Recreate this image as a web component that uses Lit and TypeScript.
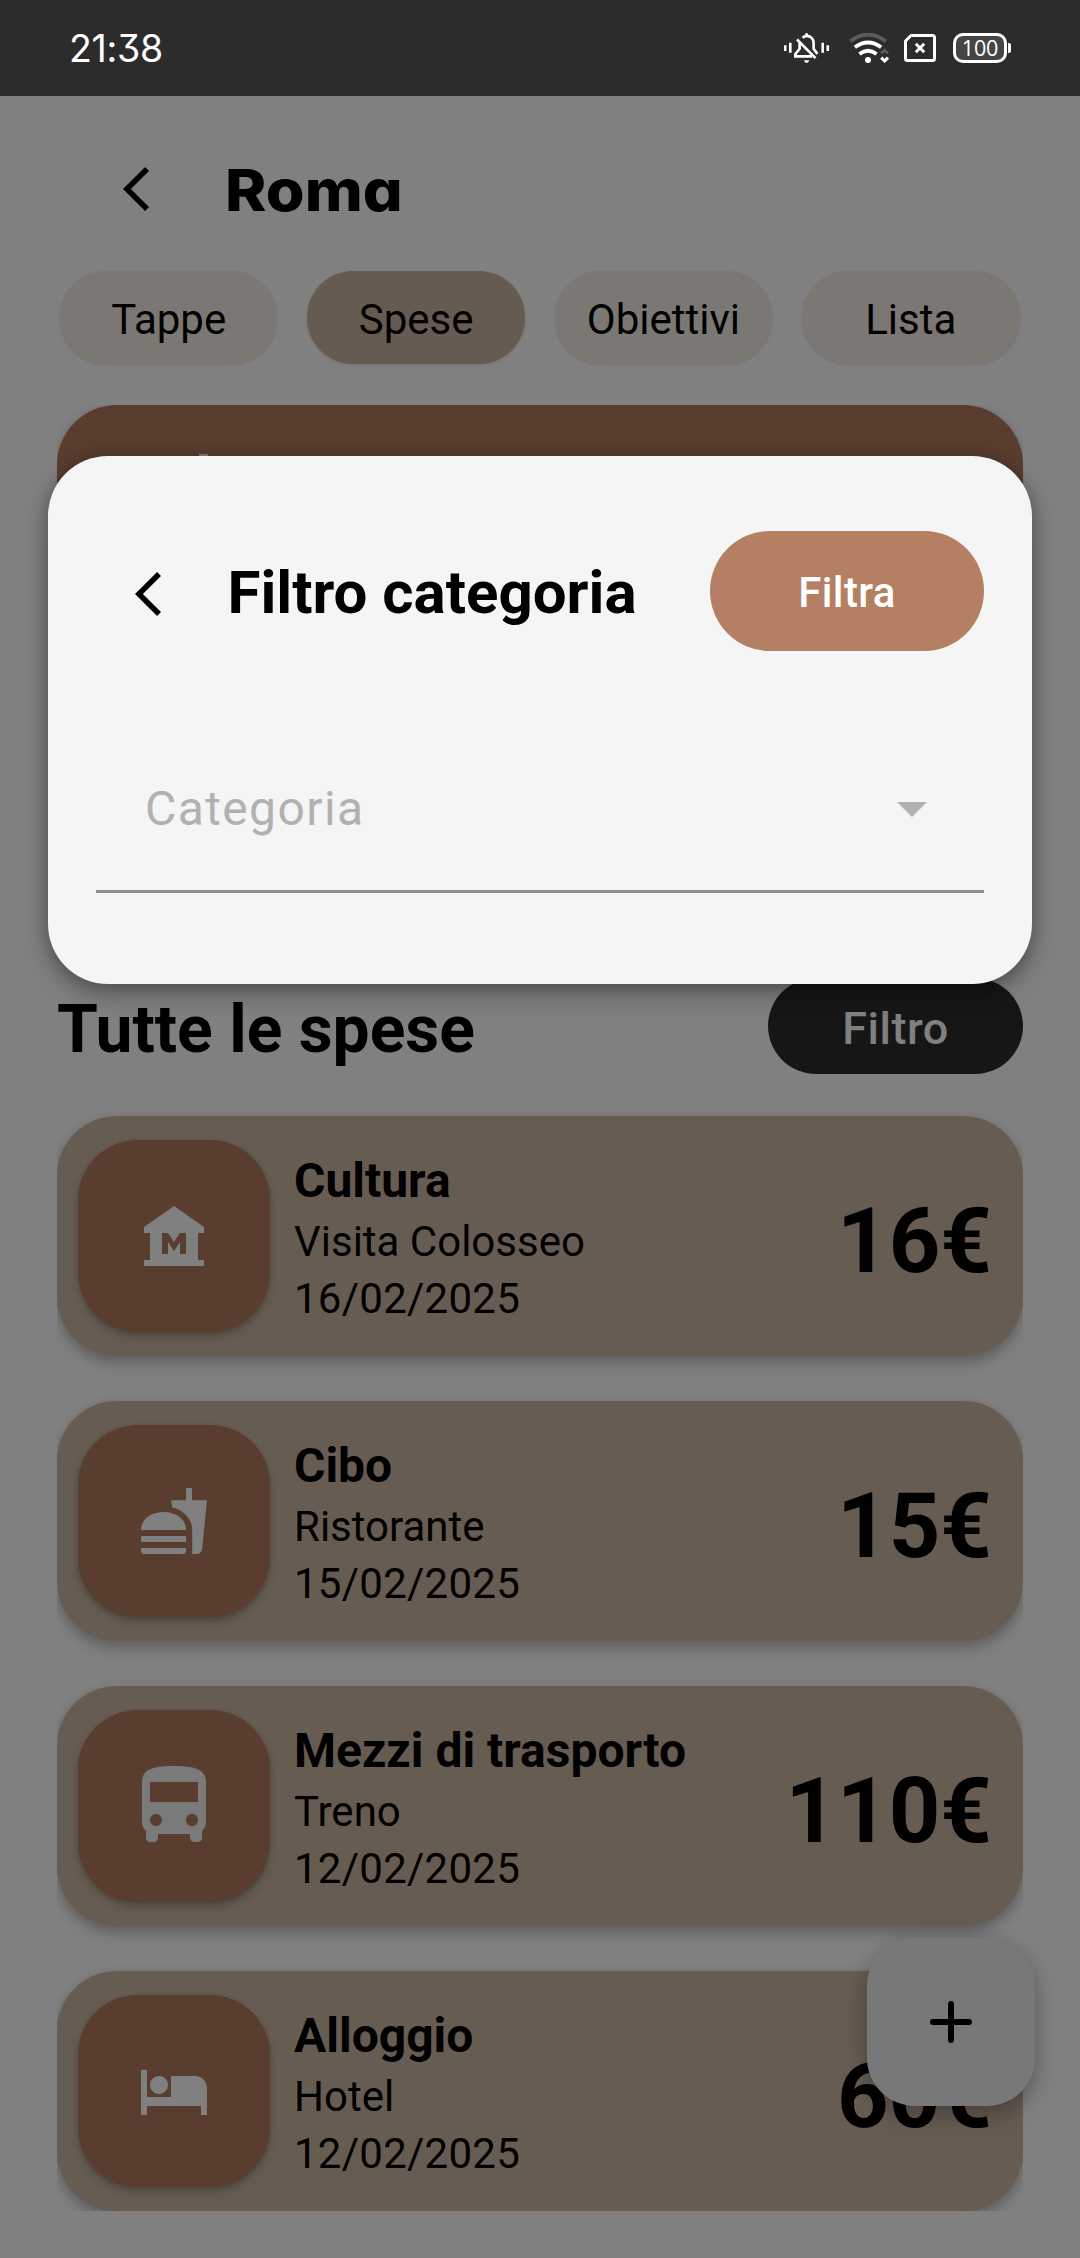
import { LitElement, html, css, svg } from "lit";
import { customElement, property } from "lit/decorators.js";

type Expense = { icon: string; category: string; title: string; date: string; amount: string };

const ICONS: Record<string, string> = {
  museum:
    "M22 11V9L12 2 2 9v2h2v9H2v2h20v-2h-2v-9h2zm-6 7h-2v-4l-2 3-2-3v4H8v-7h2l2 3 2-3h2v7z",
  food:
    "M18.06 22.99h1.66c.84 0 1.53-.64 1.63-1.46L23 5.05h-5V1h-1.97v4.05h-4.97l.3 2.34c1.71.47 3.31 1.32 4.27 2.26 1.44 1.42 2.43 2.89 2.43 5.29v8.05zM1 21.99V21h15.03v.99c0 .55-.45 1-1.01 1H2.01c-.56 0-1.01-.45-1.01-1zm15.03-7c0-8-15.03-8-15.03 0h15.03zM1.02 17h15v2h-15z",
  bus:
    "M4 16c0 .88.39 1.67 1 2.22V20c0 .55.45 1 1 1h1c.55 0 1-.45 1-1v-1h8v1c0 .55.45 1 1 1h1c.55 0 1-.45 1-1v-1.78c.61-.55 1-1.34 1-2.22V6c0-3.5-3.58-4-8-4s-8 .5-8 4v10zm3.5 1c-.83 0-1.5-.67-1.5-1.5S6.67 14 7.5 14s1.5.67 1.5 1.5S8.33 17 7.5 17zm9 0c-.83 0-1.5-.67-1.5-1.5s.67-1.5 1.5-1.5 1.5.67 1.5 1.5-.67 1.5-1.5 1.5zm1.5-6H6V6h12v5z",
  hotel:
    "M7 13c1.66 0 3-1.34 3-3S8.66 7 7 7s-3 1.34-3 3 1.34 3 3 3zm12-6h-8v7H3V5H1v15h2v-3h18v3h2v-9c0-2.21-1.79-4-4-4z",
};

const EXPENSES: Expense[] = [
  { icon: "museum", category: "Cultura", title: "Visita Colosseo", date: "16/02/2025", amount: "16€" },
  { icon: "food", category: "Cibo", title: "Ristorante", date: "15/02/2025", amount: "15€" },
  { icon: "bus", category: "Mezzi di trasporto", title: "Treno", date: "12/02/2025", amount: "110€" },
  { icon: "hotel", category: "Alloggio", title: "Hotel", date: "12/02/2025", amount: "60€" },
];

const TABS = ["Tappe", "Spese", "Obiettivi", "Lista"];

const chevron = html`<svg width="26" height="44" viewBox="0 2.1 11.67 19.8" preserveAspectRatio="none">
  <path d="M11.67 3.87L9.9 2.1 0 12l9.9 9.9 1.77-1.77L3.54 12z" />
</svg>`;

@customElement("status-bar")
export class StatusBar extends LitElement {
  static styles = css`
    :host {
      display: flex;
      justify-content: space-between;
      align-items: center;
      height: 96px;
      padding: 0 69px 0 69px;
      box-sizing: border-box;
      background: #2c2c2c;
      color: #fff;
    }
    .time {
      font: 400 37.5px/44px Inter, Roboto, sans-serif;
      font-feature-settings: "cv09" 1;
      letter-spacing: -0.3px;
      padding-top: 1px;
    }
    .icons {
      display: flex;
      align-items: center;
    }
    .bell { margin-right: 19px; }
    .wifi { margin-right: 14px; }
    .sim { margin-right: 17px; }
    .battery {
      display: grid;
      place-items: center;
      width: 54px;
      height: 30px;
      box-sizing: border-box;
      border: 3px solid #fff;
      border-radius: 10px;
      background: #454545;
      font: 400 21.5px/24px "Open Sans", "Noto Sans", sans-serif;
      letter-spacing: -0.2px;
    }
    .nub {
      width: 3px;
      height: 10px;
      margin-left: 1px;
      border-radius: 0 2px 2px 0;
      background: #fff;
    }
  `;
  render() {
    return html`
      <span class="time">21:38</span>
      <div class="icons">
        <svg class="bell" width="46" height="30" viewBox="784 33 46 30" fill="none" stroke="#fff" stroke-width="2.6">
          <path d="M785.2 45.3v5.6M790.3 42.8v10M822.7 42.8v10M827.8 45.3v5.6" />
          <path d="M802.6 37.8c1.2-1.2 2.8-1.9 4-1.9 4 0 7 3 7 7v6l3.8 5M799.6 42.3v6.6l-4.3 5.2v2.3H812" />
          <path d="M797 39.5l18.5 18.7" />
          <path d="M806.6 33.2v2.5" />
          <path d="M804 60.2h5.2c-.5 1.7-1.4 2.6-2.6 2.6s-2.1-.9-2.6-2.6z" fill="#fff" stroke="none" />
        </svg>
        <svg class="wifi" width="41" height="30" viewBox="849 33 41 30" fill="none">
          <path d="M850.3 41.3Q868 27.8 885.8 41.3" stroke="#5c5c5c" stroke-width="3.6" />
          <path d="M854.8 47.3Q868 37.8 881.2 47.3" stroke="#fff" stroke-width="3.8" />
          <path d="M859.4 54Q868 47.6 876.6 54" stroke="#fff" stroke-width="3.8" />
          <circle cx="868" cy="60" r="3" fill="#fff" />
          <path d="M881.2 53.4l3.4-3.2 3.4 3.2" stroke="#5c5c5c" stroke-width="2.6" />
          <path d="M881.2 57.6l3.4 3.4 3.4-3.4" stroke="#fff" stroke-width="3" />
        </svg>
        <svg class="sim" width="32" height="28" viewBox="904 34 32 28" fill="none" stroke="#fff" stroke-width="3">
          <path d="M911 35.5h21.5q2 0 2 2v21q0 2-2 2h-25q-2 0-2-2V41z" stroke-linejoin="round" />
          <path d="M915.8 43.8l8.4 8.4M924.2 43.8l-8.4 8.4" />
        </svg>
        <div class="battery">100</div>
        <div class="nub"></div>
      </div>
    `;
  }
}

@customElement("expense-card")
export class ExpenseCard extends LitElement {
  @property({ attribute: false }) expense!: Expense;

  static styles = css`
    :host {
      display: flex;
      height: 240px;
      box-sizing: border-box;
      padding: 24px 31px 24px 21px;
      border-radius: 60px;
      background: #665c52;
      box-shadow: 0 8px 14px rgba(0, 0, 0, 0.2), 0 2px 10px rgba(0, 0, 0, 0.1);
      color: #000;
    }
    .tile {
      display: grid;
      place-items: center;
      flex: none;
      width: 192px;
      height: 192px;
      border-radius: 60px;
      background: #593d2f;
      box-shadow: 0 5px 9px rgba(0, 0, 0, 0.2), 0 1px 4px rgba(0, 0, 0, 0.1);
    }
    .glyph { width: 72px; height: 72px; fill: #808080; }
    .glyph.bus { width: 96px; height: 96px; fill: #7a7a7a; }
    .info {
      flex: 1;
      padding: 12px 0 0 24px;
      font-size: 42px;
      line-height: 57px;
      white-space: nowrap;
    }
    .category {
      margin-bottom: 4px;
      font-size: 48px;
      font-weight: 700;
    }
    .date { letter-spacing: 0.25px; }
    .amount {
      align-self: center;
      font-size: 90px;
      font-weight: 700;
      line-height: 106px;
      padding-top: 11px;
    }
  `;
  render() {
    const e = this.expense;
    return html`
      <div class="tile">
        <svg class="glyph ${e.icon}" viewBox="0 0 24 24">${svg`<path d=${ICONS[e.icon]} />`}</svg>
      </div>
      <div class="info">
        <div class="category">${e.category}</div>
        <div>${e.title}</div>
        <div class="date">${e.date}</div>
      </div>
      <div class="amount">${e.amount}</div>
    `;
  }
}

@customElement("filter-dialog")
export class FilterDialog extends LitElement {
  static styles = css`
    :host {
      display: flex;
      flex-direction: column;
      box-sizing: border-box;
      height: 528px;
      padding: 75px 48px 0;
      border-radius: 60px;
      background: #f5f5f5;
      box-shadow: 0 10px 26px rgba(0, 0, 0, 0.3), 0 2px 14px rgba(0, 0, 0, 0.18);
      color: #000;
    }
    .head {
      display: flex;
      align-items: center;
      height: 120px;
      padding-left: 39px;
    }
    .head svg { margin-top: 6px; }
    .title {
      flex: 1;
      margin: 4px 0 0 66.5px;
      font-size: 60px;
      font-weight: 700;
      line-height: 70px;
      white-space: nowrap;
    }
    .apply {
      width: 274px;
      height: 120px;
      border: 0;
      padding: 3px 0 0;
      border-radius: 60px;
      background: #b47f63;
      color: #fff;
      font: 500 42px/50px Roboto, sans-serif;
      letter-spacing: 0.4px;
    }
    .select {
      display: flex;
      align-items: center;
      justify-content: space-between;
      height: 162px;
      margin-top: 77px;
      padding: 0 57px 0 49px;
      border-bottom: 3px solid #8f8f8f;
      color: #b3b0b0;
      font-size: 48px;
      line-height: 56px;
      letter-spacing: 1.4px;
    }
    .arrow { fill: #b3b0b0; }
  `;
  render() {
    return html`
      <div class="head">
        ${chevron}
        <div class="title">Filtro categoria</div>
        <button class="apply">Filtra</button>
      </div>
      <div class="select">
        <span>Categoria</span>
        <svg class="arrow" width="30" height="15" viewBox="0 0 10 5"><path d="M0 0l5 5 5-5z" /></svg>
      </div>
    `;
  }
}

@customElement("app-root")
export class AppRoot extends LitElement {
  static styles = css`
    :host {
      display: flex;
      flex-direction: column;
      position: relative;
      width: 1080px;
      height: 2258px;
      overflow: hidden;
      background: #808080;
      color: #000;
      font-family: Roboto, sans-serif;
    }
    .header {
      display: flex;
      align-items: center;
      height: 174.5px;
      flex: none;
      box-sizing: border-box;
      padding: 12px 0 0 123px;
    }
    .place {
      margin-left: 75.5px;
      padding-top: 1px;
      font: 800 57.5px/70px Inter, sans-serif;
      font-feature-settings: "cv11";
      transform: scaleX(1.09);
      transform-origin: left center;
    }
    .tabs {
      display: grid;
      grid-template-columns: repeat(4, 1fr);
      gap: 30px;
      flex: none;
      padding: 0 60.5px 0 60px;
    }
    .tab {
      display: grid;
      place-items: center;
      height: 93.5px;
      box-sizing: border-box;
      border-radius: 46px;
      background: #7b7772;
      box-shadow: 0 1px 3px rgba(0, 0, 0, 0.12);
      padding-top: 6px;
      font-size: 42px;
      line-height: 50px;
    }
    .tab.active { background: #655b51; }
    .scroll {
      display: flex;
      flex-direction: column;
      flex: none;
      height: 1806px;
      margin: 41px 57px 0;
      overflow: hidden;
    }
    .summary {
      flex: none;
      height: 500px;
      box-sizing: border-box;
      padding: 49px 0 0 142px;
      border-radius: 60px;
      background: #593d2f;
      box-shadow: 0 8px 14px rgba(0, 0, 0, 0.2), 0 2px 10px rgba(0, 0, 0, 0.1);
    }
    .accent {
      width: 9px;
      height: 40px;
      background: #808080;
    }
    .list-head {
      display: flex;
      align-items: center;
      justify-content: space-between;
      flex: none;
      height: 96px;
      margin: 73px 0 42px;
    }
    .list-title {
      padding-top: 8px;
      font-size: 66px;
      font-weight: 700;
      line-height: 78px;
    }
    .filter {
      width: 255px;
      height: 96px;
      border: 0;
      padding: 6px 0 0;
      border-radius: 48px;
      background: #161616;
      color: #808080;
      font: 500 45px/54px Roboto, sans-serif;
      letter-spacing: 0.5px;
    }
    .list {
      display: flex;
      flex-direction: column;
      gap: 45px;
    }
    .fab {
      position: absolute;
      left: 867px;
      top: 1938px;
      display: grid;
      place-items: center;
      width: 168px;
      height: 168px;
      border-radius: 48px;
      background: #787878;
      box-shadow: 0 12px 24px rgba(0, 0, 0, 0.2), 0 3px 18px rgba(0, 0, 0, 0.12);
    }
    .dialog {
      position: absolute;
      left: 48px;
      right: 48px;
      top: 456px;
    }
  `;
  render() {
    return html`
      <status-bar></status-bar>
      <div class="header">
        ${chevron}
        <div class="place">Roma</div>
      </div>
      <div class="tabs">
        ${TABS.map((t) => html`<div class="tab ${t === "Spese" ? "active" : ""}">${t}</div>`)}
      </div>
      <div class="scroll">
        <div class="summary"><div class="accent"></div></div>
        <div class="list-head">
          <div class="list-title">Tutte le spese</div>
          <button class="filter">Filtro</button>
        </div>
        <div class="list">
          ${EXPENSES.map((e) => html`<expense-card .expense=${e}></expense-card>`)}
        </div>
      </div>
      <div class="fab">
        <svg width="42" height="42" viewBox="0 0 42 42" stroke="#000" stroke-width="6" stroke-linecap="round">
          <path d="M21 3v36M3 21h36" />
        </svg>
      </div>
      <filter-dialog class="dialog"></filter-dialog>
    `;
  }
}
